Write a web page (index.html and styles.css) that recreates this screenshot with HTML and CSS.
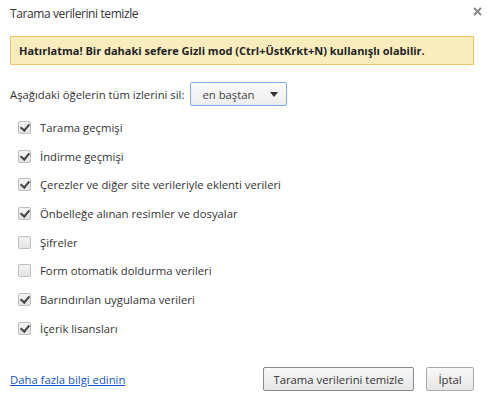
FILE: index.html
```html
<!DOCTYPE html>
<html lang="tr">

<head>
    <meta charset="UTF-8">
    <title>Tarama verilerini temizle</title>
    <link rel="stylesheet" href="styles.css">
</head>

<body>

    <div class="dialog">
        <div class="dialog-header">
            <h1>Tarama verilerini temizle</h1>
            <span class="close-btn">
                <svg width="9" height="9" viewBox="0 0 9 9">
                    <path d="M1 1 L8 8 M8 1 L1 8" stroke="#8a8a8a" stroke-width="2" />
                </svg>
            </span>
        </div>

        <div class="reminder">Hatırlatma! Bir dahaki sefere Gizli mod (Ctrl+ÜstKrkt+N) kullanışlı olabilir.</div>

        <div class="period-row">
            <span>Aşağıdaki öğelerin tüm izlerini sil:</span>
            <div class="select">
                <span>en baştan</span>
                <span class="arrow"></span>
            </div>
        </div>

        <ul class="options">
            <li><span class="check checked"></span>Tarama geçmişi</li>
            <li><span class="check checked"></span>İndirme geçmişi</li>
            <li><span class="check checked"></span>Çerezler ve diğer site verileriyle eklenti verileri</li>
            <li><span class="check checked"></span>Önbelleğe alınan resimler ve dosyalar</li>
            <li><span class="check"></span>Şifreler</li>
            <li><span class="check"></span>Form otomatik doldurma verileri</li>
            <li><span class="check checked"></span>Barındırılan uygulama verileri</li>
            <li><span class="check checked"></span>İçerik lisansları</li>
        </ul>

        <div class="dialog-footer">
            <a href="#" class="more-link">Daha fazla bilgi edinin</a>
            <div class="buttons">
                <button>Tarama verilerini temizle</button>
                <button>İptal</button>
            </div>
        </div>
    </div>

</body>

</html>
```

FILE: styles.css
```css
* {
    box-sizing: border-box;
}

body {
    margin: 0;
    padding: 0;
    background: #fff;
    font-family: "Open Sans", "Noto Sans", sans-serif;
    font-size: 11.3px;
    color: #333;
}

.dialog {
    width: 487px;
    height: 397px;
    padding: 0 13px 0 10px;
    display: flex;
    flex-direction: column;
}

.dialog-header {
    display: flex;
    justify-content: space-between;
    align-items: flex-start;
    height: 36px;
}

.dialog-header h1 {
    margin: 5px 0 0;
    font-size: 12px;
    font-weight: normal;
    letter-spacing: -0.4px;
    color: #333;
}

.close-btn {
    margin: 4px -8px 0 0;
}

.reminder {
    height: 29px;
    padding: 0 8px;
    display: flex;
    align-items: center;
    background: #f9edbe;
    border: 1px solid #f0c36d;
    font-weight: bold;
    font-size: 11px;
    color: #222;
}

.period-row {
    display: flex;
    align-items: center;
    margin-top: 17px;
    gap: 6px;
}

.select {
    width: 97px;
    height: 24px;
    padding: 0 8px 0 11px;
    display: flex;
    align-items: center;
    justify-content: space-between;
    border: 1px solid #7ea9f0;
    border-radius: 2px;
    background: linear-gradient(#fafafa, #ededed);
    color: #444;
}

.arrow {
    width: 0;
    height: 0;
    border-left: 4px solid transparent;
    border-right: 4px solid transparent;
    border-top: 5px solid #333;
}

.options {
    list-style: none;
    margin: 7px 0 0;
    padding: 0 0 0 8px;
}

.options li {
    height: 28.7px;
    display: flex;
    align-items: center;
    color: #333;
}

.check {
    width: 13px;
    height: 13px;
    margin-right: 9px;
    border: 1px solid #bdbdbd;
    border-radius: 2px;
    background: linear-gradient(#f4f4f4, #e4e4e4);
    position: relative;
}

.check.checked::after {
    content: "";
    position: absolute;
    left: 3px;
    top: 0px;
    width: 4px;
    height: 7px;
    border-right: 2px solid #444;
    border-bottom: 2px solid #444;
    transform: rotate(40deg);
}

.dialog-footer {
    margin-top: auto;
    margin-bottom: 6px;
    display: flex;
    justify-content: space-between;
    align-items: center;
}

.more-link {
    color: #15c;
    text-decoration: underline;
}

.buttons {
    display: flex;
    gap: 12px;
}

button {
    height: 24px;
    padding: 0;
    border: 1px solid #aaa;
    border-radius: 2px;
    background: linear-gradient(#f8f8f8, #e6e6e6);
    font-family: inherit;
    font-size: 11.3px;
    color: #333;
    white-space: nowrap;
}

button:first-child {
    width: 151px;
    border-color: #888;
}

button:last-child {
    width: 48px;
}
```
